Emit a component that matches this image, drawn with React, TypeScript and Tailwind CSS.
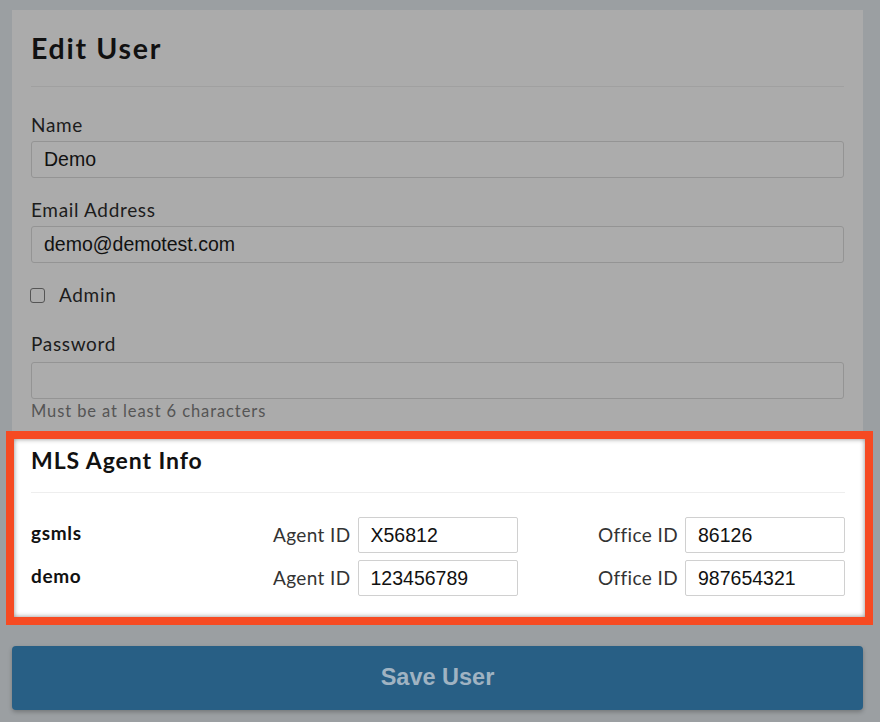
const avenir = "font-['Lato','Noto_Sans',sans-serif]";
const helv = "font-['Liberation_Sans',Arial,sans-serif]";

function Label({ children, className = "" }: { children: React.ReactNode; className?: string }) {
  return (
    <div className={`${avenir} tracking-[0.035em] text-[19px] leading-[24px] text-[#1c1c1c] ${className}`}>
      {children}
    </div>
  );
}

function DimInput({ value, className = "" }: { value?: string; className?: string }) {
  return (
    <div
      className={`${helv} h-[37px] rounded-[3px] border border-[#949494] bg-[#acacac] pl-[12px] text-[19.5px] leading-[35px] text-[#111] ${className}`}
    >
      {value}
    </div>
  );
}

function IdField({ label, value }: { label: string; value: string }) {
  return (
    <div className="flex items-center justify-end gap-[7px]">
      <span className={`${avenir} tracking-[0.02em] text-[19px] text-[#333]`}>{label}</span>
      <div
        className={`${helv} h-[36px] w-[160px] rounded-[2px] border border-[#d0d0d0] bg-white pl-[12px] text-[19.5px] leading-[34px] text-[#111]`}
      >
        {value}
      </div>
    </div>
  );
}

const agents = [
  { name: "gsmls", agent: "X56812", office: "86126" },
  { name: "demo", agent: "123456789", office: "987654321" },
];

export default function App() {
  return (
    <div className="min-h-[722px] w-[880px] bg-[#9b9fa2] pt-[10px]">
      <div className="ml-[12px] mr-[17px] bg-[#ababab] px-[19px] pt-[20px] pb-[10px]">
        <h1 className={`${avenir} tracking-[0.06em] text-[28.5px] font-bold leading-[36px] text-[#111]`}>Edit User</h1>
        <div className="mt-[20px] border-t border-[#a0a0a0]" />

        <Label className="mt-[26px]">Name</Label>
        <DimInput value="Demo" className="mt-[4px]" />

        <Label className="mt-[20px]">Email Address</Label>
        <DimInput value="demo@demotest.com" className="mt-[4px]" />

        <div className="mt-[20px] flex items-center gap-[14px]">
          <span className="-ml-[1px] h-[15px] w-[15px] rounded-[3px] border border-[#555] bg-[#acacac]" />
          <Label>Admin</Label>
        </div>

        <Label className="mt-[25px]">Password</Label>
        <DimInput className="mt-[6px] h-[36px]" />
        <div className={`${avenir} tracking-[0.055em] mt-[2px] text-[16.5px] leading-[20px] text-[#555]`}>
          Must be at least 6 characters
        </div>
      </div>

      <div className="ml-[6px] mr-[7px] border-[8px] border-[#f64a22] bg-white pl-[17px] pr-[20px] pt-[7px] pb-[21px] shadow-[inset_0_0_5px_rgba(0,0,0,0.45)]">
        <h2 className={`${avenir} tracking-[0.04em] text-[23px] font-bold leading-[28px] text-[#111]`}>MLS Agent Info</h2>
        <div className="mt-[18px] border-t border-[#eeeeee]" />
        <div className="mt-[24px] flex flex-col gap-[7px]">
          {agents.map((a) => (
            <div key={a.name} className="grid grid-cols-[159px_1fr_1fr] items-center">
              <span className={`${avenir} tracking-[0.035em] -mt-[3px] text-[19px] font-bold text-[#111]`}>{a.name}</span>
              <IdField label="Agent ID" value={a.agent} />
              <IdField label="Office ID" value={a.office} />
            </div>
          ))}
        </div>
      </div>

      <button
        className={`${helv} ml-[12px] mt-[21px] flex h-[64px] w-[851px] items-center justify-center rounded-[4px] bg-[#285f85] text-[23.5px] font-bold text-[#a0b3c2] shadow-[0_2px_4px_rgba(0,0,0,0.25)]`}
      >
        Save User
      </button>
    </div>
  );
}
